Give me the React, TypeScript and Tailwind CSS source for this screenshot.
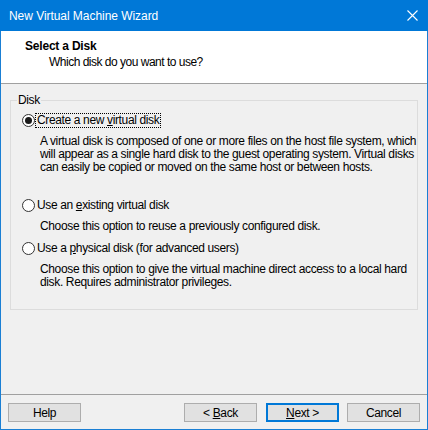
import React from 'react';

const FONT = "font-['Segoe_UI','Liberation_Sans',Arial,sans-serif]";

function Radio({ checked }: { checked?: boolean }) {
  return (
    <span className="w-[13px] h-[13px] rounded-full border border-[#333] bg-white flex items-center justify-center shrink-0">
      {checked && <span className="w-[7px] h-[7px] rounded-full bg-[#1a1a1a]" />}
    </span>
  );
}

function Option({
  checked,
  label,
  desc,
  focused,
  className = '',
}: {
  checked?: boolean;
  label: React.ReactNode;
  desc: string[];
  focused?: boolean;
  className?: string;
}) {
  return (
    <div className={`flex flex-col ${className}`}>
      <div className="flex items-center pl-[11px] h-[15px]">
        <Radio checked={checked} />
        <span
          className={`ml-[1px] px-[1px] leading-[13px] whitespace-nowrap ${
            focused ? 'outline outline-1 outline-dotted outline-black' : ''
          }`}
        >
          {label}
        </span>
      </div>
      <div className="pl-[29px] mt-[7px] leading-[13px] whitespace-nowrap">
        {desc.map((l) => (
          <div key={l}>{l}</div>
        ))}
      </div>
    </div>
  );
}

function Button({ children, primary }: { children: React.ReactNode; primary?: boolean }) {
  return (
    <button
      className={`w-[73px] h-[19px] bg-[#e1e1e1] text-[12px] leading-none text-black flex items-center justify-center ${
        primary ? 'border-2 border-[#0078d7]' : 'border border-[#adadad]'
      }`}
    >
      <span>{children}</span>
    </button>
  );
}

export default function App() {
  return (
    <div className={`${FONT} w-[428px] h-[430px] flex flex-col bg-[#f0f0f0] border-x border-b border-[#1a7fd4] text-[12px] tracking-[-0.36px] text-black`}>
      {/* title bar */}
      <div className="-mx-px h-[31px] bg-[#0078d7] flex items-center justify-between pl-[9px] pr-[10px] shrink-0">
        <span className="text-white text-[12px] tracking-[-0.05px]">New Virtual Machine Wizard</span>
        <svg width="11" height="11" viewBox="0 0 11 11">
          <path d="M0.5 0.5 L10.5 10.5 M10.5 0.5 L0.5 10.5" stroke="white" strokeWidth="1.1" />
        </svg>
      </div>

      {/* header */}
      <div className="h-[53px] bg-white border-b border-[#a0a0a0] shrink-0 pt-[7px] leading-[16px]">
        <div className="pl-[24px] font-bold tracking-[-0.2px]">Select a Disk</div>
        <div className="pl-[48px] tracking-[-0.5px]">Which disk do you want to use?</div>
      </div>

      {/* body */}
      <div className="flex-1 px-[9px] pt-[10px]">
        <fieldset className="border border-[#dcdcdc] h-[216px] flex flex-col">
          <legend className="ml-[6px] px-[1px] leading-[13px]">Disk</legend>
          <div className="mt-[6px] flex flex-col">
            <Option
              checked
              focused
              className="mb-[24px]"
              label={<>Create a new <u>v</u>irtual disk</>}
              desc={[
                'A virtual disk is composed of one or more files on the host file system, which',
                'will appear as a single hard disk to the guest operating system. Virtual disks',
                'can easily be copied or moved on the same host or between hosts.',
              ]}
            />
            <Option
              className="mb-[8px]"
              label={<>Use an <u>e</u>xisting virtual disk</>}
              desc={['Choose this option to reuse a previously configured disk.']}
            />
            <Option
              label={<>Use a <u>p</u>hysical disk (for advanced users)</>}
              desc={[
                'Choose this option to give the virtual machine direct access to a local hard',
                'disk. Requires administrator privileges.',
              ]}
            />
          </div>
        </fieldset>
      </div>

      {/* footer */}
      <div className="border-t border-[#a0a0a0] shrink-0 h-[35px] flex items-start pt-[8px] px-[7px]">
        <Button>Help</Button>
        <div className="ml-auto flex gap-[8px]">
          <div className="flex gap-[9px]">
            <Button>&lt; <u>B</u>ack</Button>
            <Button primary><u>N</u>ext &gt;</Button>
          </div>
          <Button>Cancel</Button>
        </div>
      </div>
    </div>
  );
}
